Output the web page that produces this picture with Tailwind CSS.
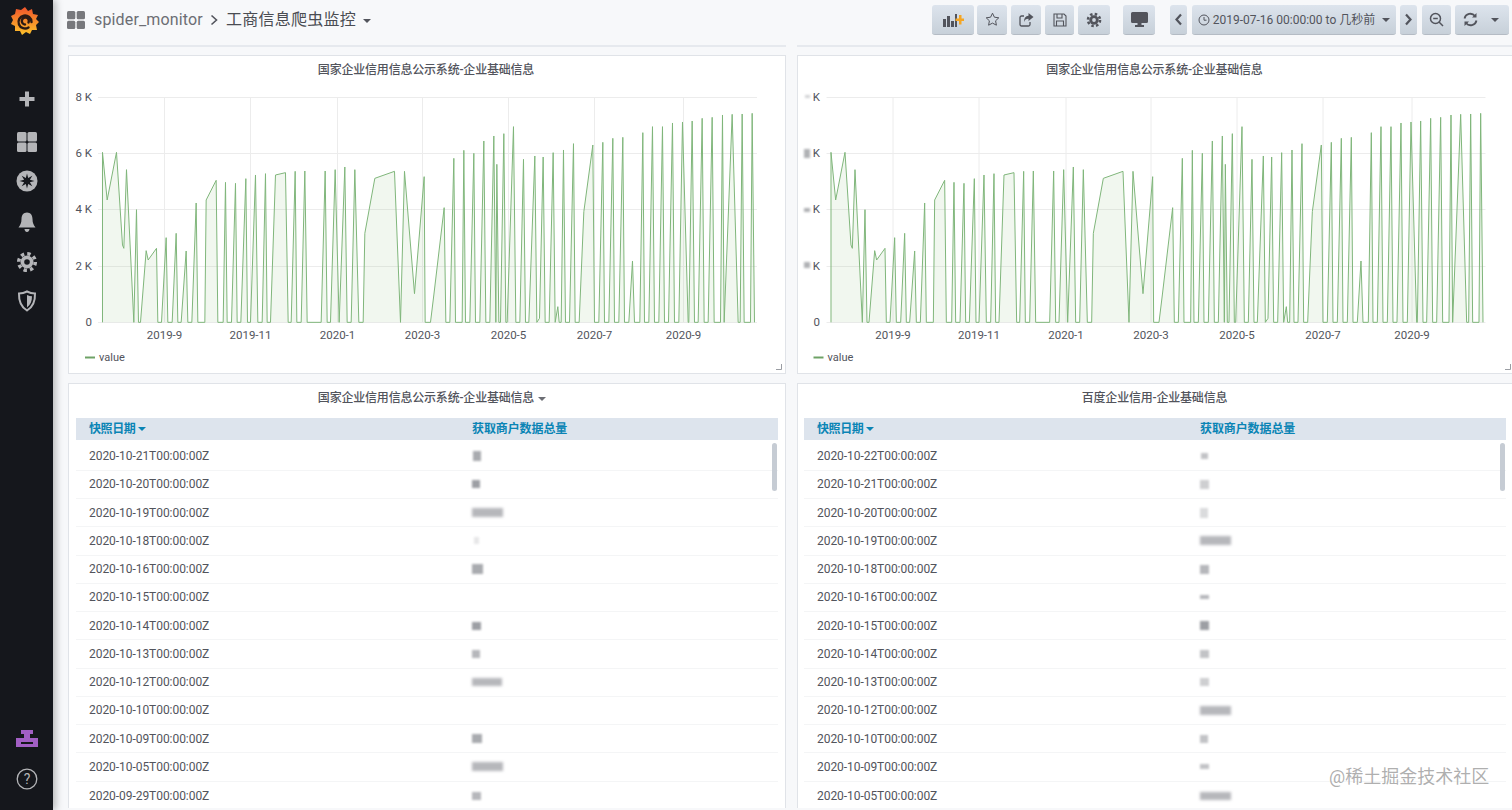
<!DOCTYPE html>
<html lang="zh">
<head>
<meta charset="utf-8">
<title>工商信息爬虫监控</title>
<script src="https://cdn.jsdelivr.net/npm/@tailwindcss/browser@4"></script>
</head>
<body class="m-0 h-[810px] w-[1512px] overflow-hidden bg-[#f7f8fa] font-['Roboto','Noto_Sans_CJK_SC',sans-serif] text-[#52545c]">
<div class="flex h-[810px] w-[1512px] relative overflow-hidden">

  <!-- sidebar -->
  <aside class="relative z-10 flex h-full w-[53px] shrink-0 flex-col items-center bg-[#15171c] shadow-[3px_0_7px_rgba(0,0,0,0.25)] text-[#b4b5b8]">
    <svg class="mt-[7px] ml-[-4px]" width="28" height="28" viewBox="0 0 28 28">
      <defs><linearGradient id="gl" x1="0" y1="1" x2="0" y2="0"><stop offset="0" stop-color="#fcc22a"/><stop offset="1" stop-color="#f0532b"/></linearGradient></defs>
      <path fill="url(#gl)" d="M14 0l3 4 4-2 1 5 5 1-2 4 3 3-3 3 1 5-5 0-2 4-4-2-4 3-2-4-5 0 0-5-4-2 2-4-2-4 4-2 1-5 5 1z"/>
      <path fill="none" stroke="#2a1a14" stroke-width="2.400" stroke-linecap="round" d="M20.500 15a6.500 6.500 0 1 0-3 5.500M17.500 15.500a3.500 3.500 0 1 0-3.500 2"/>
    </svg>
    <svg class="mt-[56px]" width="16" height="16" viewBox="0 0 16 16"><path fill="#b4b5b8" d="M6 .5h4v5.500h5.500v4H10v5.500H6V10H.5V6H6z"/></svg>
    <svg class="mt-[24px]" width="22" height="22" viewBox="0 0 22 22"><g fill="#b4b5b8"><rect x="1" y="1" width="9.500" height="9.500" rx="1.500"/><rect x="11.500" y="1" width="9.500" height="9.500" rx="1.500"/><rect x="1" y="11.500" width="9.500" height="9.500" rx="1.500"/><rect x="11.500" y="11.500" width="9.500" height="9.500" rx="1.500"/></g></svg>
    <svg class="mt-[17px]" width="22" height="22" viewBox="0 0 22 22"><circle cx="11" cy="11" r="10.500" fill="#b4b5b8"/><polygon fill="#15171c" points="11,3.500 12.200,8.100 16.300,5.700 13.900,9.800 18.500,11 13.900,12.200 16.300,16.300 12.200,13.900 11,18.500 9.800,13.900 5.700,16.300 8.100,12.200 3.500,11 8.100,9.800 5.700,5.700 9.800,8.100"/></svg>
    <svg class="mt-[19px]" width="18" height="22" viewBox="0 0 18 22"><path fill="#b4b5b8" d="M9 1.500c3.500 0 5.500 2.800 5.500 6.500 0 4 1.200 6 3 8.500H.5c1.800-2.500 3-4.500 3-8.500C3.500 4.300 5.500 1.500 9 1.500zM6.500 18h5c0 1.500-1 3-2.500 3s-2.500-1.500-2.500-3z"/></svg>
    <svg class="mt-[18px]" width="22" height="22" viewBox="0 0 22 22"><circle cx="11" cy="11" r="6.500" fill="#b4b5b8"/><circle cx="11" cy="11" r="8.300" fill="none" stroke="#b4b5b8" stroke-width="3.500" stroke-dasharray="3.400 3.120"/><circle cx="11" cy="11" r="2.800" fill="#15171c"/></svg>
    <svg class="mt-[17px]" width="20" height="22" viewBox="0 0 20 22"><path fill="none" stroke="#b4b5b8" stroke-width="2" d="M10 1.500c2.800 1.500 5.500 2 8 2 .3 8-2 13.500-8 17-6-3.500-8.300-9-8-17 2.500 0 5.200-.5 8-2z"/><path fill="#b4b5b8" d="M10 5c1.800.8 3.500 1.200 5 1.300 0 5-1.500 8.700-5 11.200z"/></svg>
    <svg class="mt-auto" width="22" height="17" viewBox="0 0 22 17"><path fill="#a25fc4" fill-rule="evenodd" d="M5 0h12v4h-3v4h8v9H0V8h8V4H5zM5 12v2h12v-2z"/></svg>
    <svg class="mt-[21px] mb-[20px]" width="22" height="22" viewBox="0 0 22 22"><circle cx="11" cy="11" r="9.800" fill="none" stroke="#b4b5b8" stroke-width="1.300"/><text x="11" y="16" text-anchor="middle" font-size="14" fill="#b4b5b8" font-family="Roboto">?</text></svg>
  </aside>

  <div class="flex min-w-0 flex-1 flex-col">
    <!-- navbar -->
    <header class="flex h-[45px] shrink-0 items-start pl-[14px]">
      <svg class="mt-[11px]" width="18" height="18" viewBox="0 0 18 18"><g fill="#77787c"><rect x="0" y="0" width="8.300" height="8.300" rx="1.500"/><rect x="9.700" y="0" width="8.300" height="8.300" rx="1.500"/><rect x="0" y="9.700" width="8.300" height="8.300" rx="1.500"/><rect x="9.700" y="9.700" width="8.300" height="8.300" rx="1.500"/></g></svg>
      <div class="ml-[9px] mt-[9px] flex h-[22px] items-center text-[16px] leading-[22px]">
        <span class="tracking-[0.15px] text-[#6c6e74]">spider_monitor</span>
        <svg class="ml-[6px]" width="10" height="12" viewBox="0 0 10 12"><path fill="none" stroke="#52545c" stroke-width="1.600" d="M2.500 1.500L7.500 6l-5 4.500"/></svg>
        <span class="ml-[7px] tracking-[0.25px] text-[#4a4c52]">工商信息爬虫监控</span>
        <span class="ml-[7px] mt-[2px] h-0 w-0 border-x-[4px] border-t-[4px] border-x-transparent border-t-[#52545c]"></span>
      </div>
      <div class="ml-auto mt-[5px] flex h-[30px] items-stretch text-[#52545c]">
        <button class="flex w-[42px] items-center justify-center rounded-[3px] border-b border-[#b4bbc4] bg-gradient-to-b from-[#dde4ed] to-[#c7d0d9]"><svg width="22" height="16" viewBox="0 0 22 16"><g fill="#52545c"><rect x="1" y="7" width="3" height="8"/><rect x="5" y="4" width="3" height="11"/><rect x="9" y="9" width="3" height="6"/><rect x="13" y="2" width="2" height="13"/></g><path fill="#f5a623" d="M17 3h2.500v3.500H23V9h-3.500v3.500H17V9h-3.500V6.500H17z"/></svg></button>
        <button class="ml-[3px] flex w-[30px] items-center justify-center rounded-[3px] border-b border-[#b4bbc4] bg-gradient-to-b from-[#dde4ed] to-[#c7d0d9]"><svg width="15" height="15" viewBox="0 0 15 15"><path fill="none" stroke="#52545c" stroke-width="1" d="M7.500 1.200l1.900 4 4.400.6-3.200 3 .8 4.400-3.900-2.100-3.900 2.100.8-4.400-3.200-3 4.400-.6z"/></svg></button>
        <button class="ml-[4px] flex w-[30px] items-center justify-center rounded-[3px] border-b border-[#b4bbc4] bg-gradient-to-b from-[#dde4ed] to-[#c7d0d9]"><svg width="15" height="14" viewBox="0 0 15 14"><path fill="none" stroke="#52545c" stroke-width="1.300" d="M11 9v2.500a1.500 1.500 0 0 1-1.500 1.500h-7A1.500 1.500 0 0 1 1 11.500v-7A1.500 1.500 0 0 1 2.500 3H5"/><path fill="#52545c" d="M9.500 0l5 4-5 4V5.800C7 5.800 5.800 6.700 5 9c0-3.500 1.500-6 4.500-6.200z"/></svg></button>
        <button class="ml-[4px] flex w-[29px] items-center justify-center rounded-[3px] border-b border-[#b4bbc4] bg-gradient-to-b from-[#dde4ed] to-[#c7d0d9]"><svg width="14" height="14" viewBox="0 0 14 14"><path fill="none" stroke="#52545c" stroke-width="1.100" d="M1 1h10l2 2v10H1zM4 1v4h5V1M3.500 13V8h7v5"/></svg></button>
        <button class="ml-[4px] flex w-[32px] items-center justify-center rounded-[3px] border-b border-[#b4bbc4] bg-gradient-to-b from-[#dde4ed] to-[#c7d0d9]"><svg width="16" height="16" viewBox="0 0 22 22"><circle cx="11" cy="11" r="6.500" fill="#52545c"/><circle cx="11" cy="11" r="8.300" fill="none" stroke="#52545c" stroke-width="3.500" stroke-dasharray="3.400 3.120"/><circle cx="11" cy="11" r="2.600" fill="#cfd7e0"/></svg></button>
        <button class="ml-[13px] flex w-[32px] items-center justify-center rounded-[3px] border-b border-[#b4bbc4] bg-gradient-to-b from-[#dde4ed] to-[#c7d0d9]"><svg width="17" height="15" viewBox="0 0 17 15"><path fill="#52545c" d="M1.500 0h14A1.500 1.500 0 0 1 17 1.500v8a1.500 1.500 0 0 1-1.500 1.500h-5v2H13v2H4v-2h2.500v-2h-5A1.500 1.500 0 0 1 0 9.500v-8A1.500 1.500 0 0 1 1.500 0z"/></svg></button>
        <button class="ml-[15px] flex w-[17px] items-center justify-center rounded-[3px] border-b border-[#b4bbc4] bg-gradient-to-b from-[#dde4ed] to-[#c7d0d9]"><svg width="9" height="13" viewBox="0 0 9 13"><path fill="none" stroke="#52545c" stroke-width="2.200" d="M7 1.500L2.500 6.500 7 11.500"/></svg></button>
        <button class="ml-[5px] flex w-[204px] items-center justify-center rounded-[3px] border-b border-[#b4bbc4] bg-gradient-to-b from-[#dde4ed] to-[#c7d0d9] text-[12px]"><svg class="mr-[3px]" width="12" height="12" viewBox="0 0 12 12"><circle cx="6" cy="6" r="5" fill="none" stroke="#52545c"/><path fill="none" stroke="#52545c" d="M6 3v3.200h2.500"/></svg><span>2019-07-16 00:00:00 to 几秒前</span><span class="ml-[7px] h-0 w-0 border-x-[4px] border-t-[4px] border-x-transparent border-t-[#52545c]"></span></button>
        <button class="ml-[4px] flex w-[17px] items-center justify-center rounded-[3px] border-b border-[#b4bbc4] bg-gradient-to-b from-[#dde4ed] to-[#c7d0d9]"><svg width="9" height="13" viewBox="0 0 9 13"><path fill="none" stroke="#52545c" stroke-width="2.200" d="M2 1.500L6.500 6.500 2 11.500"/></svg></button>
        <button class="ml-[5px] flex w-[29px] items-center justify-center rounded-[3px] border-b border-[#b4bbc4] bg-gradient-to-b from-[#dde4ed] to-[#c7d0d9]"><svg width="15" height="15" viewBox="0 0 15 15"><circle cx="6.500" cy="6.500" r="5" fill="none" stroke="#52545c" stroke-width="1.500"/><path stroke="#52545c" stroke-width="1.500" d="M10 10l4 4M4.200 6.500h4.600"/></svg></button>
        <button class="ml-[4px] flex w-[54px] items-center rounded-[3px] border-b border-[#b4bbc4] bg-gradient-to-b from-[#dde4ed] to-[#c7d0d9] pl-[8px]"><svg width="15" height="15" viewBox="0 0 15 15"><path fill="none" stroke="#52545c" stroke-width="1.800" d="M1.500 6.500A6 6 0 0 1 12 4M13.500 8.500A6 6 0 0 1 3 11"/><path fill="#52545c" d="M13.500 1v4.500H9zM1.500 14V9.500H6z"/></svg><span class="ml-[13px] h-0 w-0 border-x-[4px] border-t-[4px] border-x-transparent border-t-[#52545c]"></span></button>
      </div>
      <div class="w-[3px]"></div>
    </header>

    <!-- grid of panels -->
    <main class="grid min-h-0 flex-1 grid-cols-[718px_718px] grid-rows-[2px_319px_1fr] gap-x-[11px] gap-y-[8px] pb-[2px] pl-[15px]">
      <div class="border-b-2 border-[#e6e9ee]"></div>
      <div class="border-b-2 border-[#e6e9ee]"></div>

      <!-- graph 1 -->
      <section class="relative border border-[#e0e3e8] bg-white">
        <h2 class="h-[28px] pt-[5px] pr-[2px] text-center text-[12px] leading-[18px] tracking-[-0.2px] font-medium">国家企业信用信息公示系统-企业基础信息</h2>
        <svg class="block" width="716" height="280" viewBox="69 84 716 280" font-family="Roboto" font-size="11.500" fill="#52545c">
          <g id="plot">
            <g stroke="#ececec" stroke-width="1" fill="none">
              <path d="M98 97.500H757M98 153.500H757M98 209.500H757M98 266.500H757M98 322.500H757M164.500 97V322M250.500 97V322M337.500 97V322M422.500 97V322M508.500 97V322M594.500 97V322M683.500 97V322"/>
            </g>
            <g transform="translate(60.500 85) scale(0.33333)">
              <polyline id="line" fill="#7eb26d" fill-opacity="0.11" stroke="#7fb67a" stroke-width="3" stroke-linejoin="round" points="126,712 126,202 140,345 168,202 186,480 190,490 198,254 220,712 228,374 234,712 240,712 257,497 263,525 288,490 292,712 303,712 317,458 322,712 335,712 347,445 352,712 362,712 377,498 382,712 394,712 407,354 412,712 433,712 437,345 467,286 472,712 488,712 495,292 500,712 513,712 525,295 530,712 541,712 556,281 561,712 570,712 585,270 592,712 605,712 615,266 620,712 630,712 645,270 675,263 683,712 692,712 704,259 709,712 722,712 733,258 740,712 782,712 794,258 800,712 810,712 824,254 836,712 853,246 860,712 872,712 883,254 895,712 908,712 913,445 943,280 1002,259 1020,712 1032,259 1062,626 1091,275 1094,712 1110,712 1120,630 1151,368 1156,712 1168,712 1180,220 1185,712 1205,712 1210,196 1215,712 1228,712 1240,205 1245,712 1258,712 1270,168 1276,712 1288,712 1300,153 1306,712 1309,238 1315,712 1320,712 1330,146 1336,712 1340,712 1359,125 1366,712 1378,712 1389,223 1395,712 1405,712 1423,213 1429,712 1437,700 1448,216 1454,712 1466,712 1478,203 1484,712 1492,665 1496,712 1502,712 1509,195 1515,712 1527,712 1539,176 1544,712 1556,712 1570,380 1597,180 1602,712 1615,712 1627,172 1632,712 1645,712 1657,160 1662,712 1675,712 1687,157 1692,712 1705,712 1716,528 1722,712 1738,712 1747,143 1752,712 1765,712 1776,125 1782,712 1795,712 1806,125 1812,712 1824,712 1836,114 1842,712 1855,712 1866,111 1883,712 1885,712 1895,108 1902,712 1913,712 1925,100 1931,712 1943,712 1955,97 1961,712 1980,712 1986,90 1991,712 2015,88 2033,712 2039,712 2045,87 2051,712 2070,712 2075,85 2082,712"/>
            </g>
            <g text-anchor="middle">
              <text x="164.500" y="339">2019-9</text><text x="250.500" y="339">2019-11</text><text x="337.500" y="339">2020-1</text><text x="422.500" y="339">2020-3</text><text x="508.500" y="339">2020-5</text><text x="594.500" y="339">2020-7</text><text x="683.500" y="339">2020-9</text>
            </g>
            <path d="M85 357.500H95" stroke="#6ea266" stroke-width="2"/>
            <text x="99" y="361" font-size="11">value</text>
          </g>
          <g text-anchor="end">
            <text x="92" y="101">8 K</text><text x="92" y="157">6 K</text><text x="92" y="213">4 K</text><text x="92" y="270">2 K</text><text x="92" y="326">0</text>
          </g>
        </svg>
        <svg class="absolute right-[3px] bottom-[3px]" width="6" height="6" viewBox="0 0 6 6"><path d="M5.500 0v5.500H0" fill="none" stroke="#9a9da3"/></svg>
      </section>

      <!-- graph 2 -->
      <section class="relative border border-[#e0e3e8] bg-white">
        <h2 class="h-[28px] pt-[5px] pr-[3px] text-center text-[12px] leading-[18px] tracking-[-0.2px] font-medium">国家企业信用信息公示系统-企业基础信息</h2>
        <svg class="block" width="716" height="280" viewBox="798 84 716 280" font-family="Roboto" font-size="11.500" fill="#52545c">
          <use href="#plot" x="728.500"/>
          <g text-anchor="end">
            <text x="820" y="101">K</text><text x="820" y="157">K</text><text x="820" y="213">K</text><text x="820" y="270">K</text><text x="820" y="326">0</text>
          </g>
          <g fill="#8f9196" class="blur-[1px]">
            <rect x="805" y="95" width="5" height="3" opacity="0.4"/><rect x="804" y="149" width="6" height="9" opacity="0.7"/><rect x="804" y="208" width="6" height="4" opacity="0.7"/><rect x="804" y="262" width="6" height="6" opacity="0.7"/>
          </g>
        </svg>
        <svg class="absolute right-[3px] bottom-[3px]" width="6" height="6" viewBox="0 0 6 6"><path d="M5.500 0v5.500H0" fill="none" stroke="#9a9da3"/></svg>
      </section>

      <!-- table 1 -->
      <section class="relative mt-[1px] overflow-hidden border border-[#e0e3e8] border-b-0 bg-white text-[12px]">
        <h2 class="h-[34px] pt-[5px] pr-[2px] text-center text-[12px] leading-[18px] tracking-[-0.2px] font-medium"><span class="relative">国家企业信用信息公示系统-企业基础信息<span class="absolute left-[calc(100%+4px)] top-[6px] h-0 w-0 border-x-[4px] border-t-[4px] border-x-transparent border-t-[#6c6e74]"></span></span></h2>
        <div class="mx-[7px] flex h-[22px] items-center bg-[#dde4ed] font-semibold text-[#0a84b5]">
          <div class="flex w-[396px] items-center pl-[13px] tracking-[-0.4px]">快照日期<span class="ml-[3px] h-0 w-0 border-x-[4px] border-t-[4px] border-x-transparent border-t-[#0a84b5]"></span></div>
          <div class="tracking-[-0.1px]">获取商户数据总量</div>
        </div>
        <div class="absolute right-[8px] top-[59px] h-[48px] w-[5px] rounded-[3px] bg-[#c6ccd4]"></div>
        <div class="mx-[7px] mt-[2.500px] tracking-[-0.05px] text-[#52545c]">
          <div class="flex h-[28.250px] items-center border-b border-[#f4f5f6]"><div class="w-[396px] pl-[13px]">2020-10-21T00:00:00Z</div><div class="ml-[1px] h-[10px] w-[8px] bg-[#85878d]/70 blur-[1px]"></div></div>
          <div class="flex h-[28.250px] items-center border-b border-[#f4f5f6]"><div class="w-[396px] pl-[13px]">2020-10-20T00:00:00Z</div><div class="h-[8px] w-[8px] bg-[#85878d]/80 blur-[1px]"></div></div>
          <div class="flex h-[28.250px] items-center border-b border-[#f4f5f6]"><div class="w-[396px] pl-[13px]">2020-10-19T00:00:00Z</div><div class="h-[9px] w-[31px] bg-[#85878d]/60 blur-[1.500px]"></div></div>
          <div class="flex h-[28.250px] items-center border-b border-[#f4f5f6]"><div class="w-[396px] pl-[13px]">2020-10-18T00:00:00Z</div><div class="ml-[2px] h-[7px] w-[5px] bg-[#85878d]/20 blur-[1px]"></div></div>
          <div class="flex h-[28.250px] items-center border-b border-[#f4f5f6]"><div class="w-[396px] pl-[13px]">2020-10-16T00:00:00Z</div><div class="h-[10px] w-[11px] bg-[#85878d]/70 blur-[1px]"></div></div>
          <div class="flex h-[28.250px] items-center border-b border-[#f4f5f6]"><div class="w-[396px] pl-[13px]">2020-10-15T00:00:00Z</div></div>
          <div class="flex h-[28.250px] items-center border-b border-[#f4f5f6]"><div class="w-[396px] pl-[13px]">2020-10-14T00:00:00Z</div><div class="h-[8px] w-[9px] bg-[#85878d]/80 blur-[1px]"></div></div>
          <div class="flex h-[28.250px] items-center border-b border-[#f4f5f6]"><div class="w-[396px] pl-[13px]">2020-10-13T00:00:00Z</div><div class="h-[8px] w-[8px] bg-[#85878d]/60 blur-[1px]"></div></div>
          <div class="flex h-[28.250px] items-center border-b border-[#f4f5f6]"><div class="w-[396px] pl-[13px]">2020-10-12T00:00:00Z</div><div class="h-[8px] w-[30px] bg-[#85878d]/60 blur-[1.500px]"></div></div>
          <div class="flex h-[28.250px] items-center border-b border-[#f4f5f6]"><div class="w-[396px] pl-[13px]">2020-10-10T00:00:00Z</div></div>
          <div class="flex h-[28.250px] items-center border-b border-[#f4f5f6]"><div class="w-[396px] pl-[13px]">2020-10-09T00:00:00Z</div><div class="h-[9px] w-[10px] bg-[#85878d]/70 blur-[1px]"></div></div>
          <div class="flex h-[28.250px] items-center border-b border-[#f4f5f6]"><div class="w-[396px] pl-[13px]">2020-10-05T00:00:00Z</div><div class="h-[9px] w-[31px] bg-[#85878d]/60 blur-[1.500px]"></div></div>
          <div class="flex h-[28.250px] items-center"><div class="w-[396px] pl-[13px]">2020-09-29T00:00:00Z</div><div class="h-[8px] w-[9px] bg-[#85878d]/60 blur-[1px]"></div></div>
        </div>
      </section>

      <!-- table 2 -->
      <section class="relative mt-[1px] overflow-hidden border border-[#e0e3e8] border-b-0 bg-white text-[12px]">
        <h2 class="h-[34px] pt-[5px] pr-[3px] text-center text-[12px] leading-[18px] tracking-[-0.2px] font-medium">百度企业信用-企业基础信息</h2>
        <div class="ml-[6px] mr-[8px] flex h-[22px] items-center bg-[#dde4ed] font-semibold text-[#0a84b5]">
          <div class="flex w-[396px] items-center pl-[13px] tracking-[-0.4px]">快照日期<span class="ml-[3px] h-0 w-0 border-x-[4px] border-t-[4px] border-x-transparent border-t-[#0a84b5]"></span></div>
          <div class="tracking-[-0.1px]">获取商户数据总量</div>
        </div>
        <div class="absolute right-[9px] top-[59px] h-[48px] w-[5px] rounded-[3px] bg-[#c6ccd4]"></div>
        <div class="ml-[6px] mr-[8px] mt-[2.500px] tracking-[-0.05px] text-[#52545c]">
          <div class="flex h-[28.250px] items-center border-b border-[#f4f5f6]"><div class="w-[396px] pl-[13px]">2020-10-22T00:00:00Z</div><div class="ml-[1px] h-[6px] w-[7px] bg-[#85878d]/50 blur-[1px]"></div></div>
          <div class="flex h-[28.250px] items-center border-b border-[#f4f5f6]"><div class="w-[396px] pl-[13px]">2020-10-21T00:00:00Z</div><div class="h-[9px] w-[9px] bg-[#85878d]/40 blur-[1px]"></div></div>
          <div class="flex h-[28.250px] items-center border-b border-[#f4f5f6]"><div class="w-[396px] pl-[13px]">2020-10-20T00:00:00Z</div><div class="h-[10px] w-[8px] bg-[#85878d]/30 blur-[1px]"></div></div>
          <div class="flex h-[28.250px] items-center border-b border-[#f4f5f6]"><div class="w-[396px] pl-[13px]">2020-10-19T00:00:00Z</div><div class="h-[9px] w-[31px] bg-[#85878d]/60 blur-[1.500px]"></div></div>
          <div class="flex h-[28.250px] items-center border-b border-[#f4f5f6]"><div class="w-[396px] pl-[13px]">2020-10-18T00:00:00Z</div><div class="h-[9px] w-[9px] bg-[#85878d]/60 blur-[1px]"></div></div>
          <div class="flex h-[28.250px] items-center border-b border-[#f4f5f6]"><div class="w-[396px] pl-[13px]">2020-10-16T00:00:00Z</div><div class="h-[4px] w-[9px] bg-[#85878d]/60 blur-[1px]"></div></div>
          <div class="flex h-[28.250px] items-center border-b border-[#f4f5f6]"><div class="w-[396px] pl-[13px]">2020-10-15T00:00:00Z</div><div class="h-[9px] w-[9px] bg-[#85878d]/80 blur-[1px]"></div></div>
          <div class="flex h-[28.250px] items-center border-b border-[#f4f5f6]"><div class="w-[396px] pl-[13px]">2020-10-14T00:00:00Z</div><div class="h-[8px] w-[9px] bg-[#85878d]/50 blur-[1px]"></div></div>
          <div class="flex h-[28.250px] items-center border-b border-[#f4f5f6]"><div class="w-[396px] pl-[13px]">2020-10-13T00:00:00Z</div><div class="h-[8px] w-[9px] bg-[#85878d]/40 blur-[1px]"></div></div>
          <div class="flex h-[28.250px] items-center border-b border-[#f4f5f6]"><div class="w-[396px] pl-[13px]">2020-10-12T00:00:00Z</div><div class="h-[9px] w-[31px] bg-[#85878d]/60 blur-[1.500px]"></div></div>
          <div class="flex h-[28.250px] items-center border-b border-[#f4f5f6]"><div class="w-[396px] pl-[13px]">2020-10-10T00:00:00Z</div><div class="h-[8px] w-[8px] bg-[#85878d]/50 blur-[1px]"></div></div>
          <div class="flex h-[28.250px] items-center border-b border-[#f4f5f6]"><div class="w-[396px] pl-[13px]">2020-10-09T00:00:00Z</div><div class="h-[5px] w-[9px] bg-[#85878d]/50 blur-[1px]"></div></div>
          <div class="flex h-[28.250px] items-center"><div class="w-[396px] pl-[13px]">2020-10-05T00:00:00Z</div><div class="h-[8px] w-[31px] bg-[#85878d]/60 blur-[1.500px]"></div></div>
        </div>
      </section>
    </main>
  </div>

  <!-- watermark -->
  <div class="absolute left-[1329px] top-[765px] z-20 text-[18px] leading-[24px] whitespace-nowrap text-[#8c8c8c]/70 [text-shadow:0_0_2px_#fff]">@稀土掘金技术社区</div>
</div>
</body>
</html>
